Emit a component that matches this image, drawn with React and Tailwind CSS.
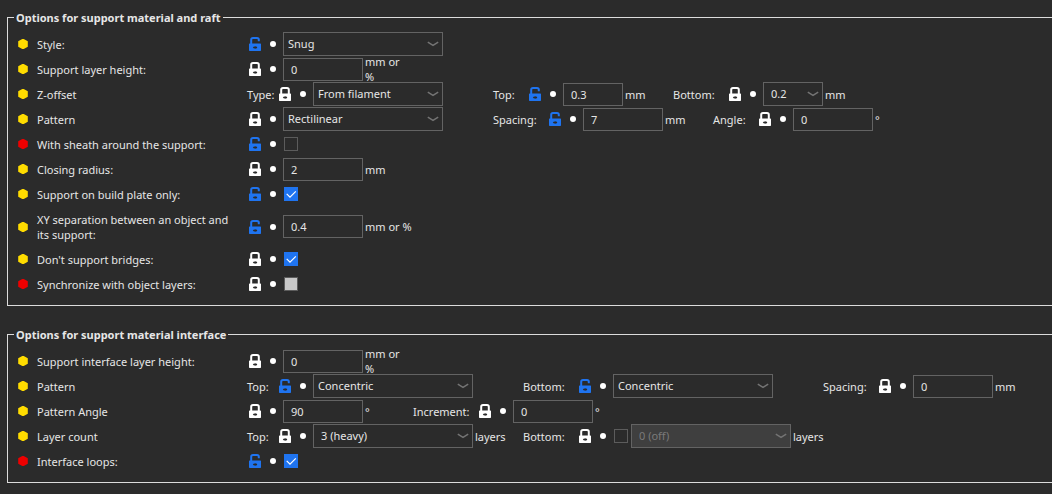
import React, { useId } from "react";

function Bullet({ color = "yellow" }) {
  return (
    <svg
      viewBox="0 0 10 10"
      className={`h-[10px] w-[10px] shrink-0 ${color === "red" ? "fill-[#ed0000]" : "fill-[#ffdc00]"}`}
      aria-hidden="true"
    >
      <path d="M5 -0.4 9.8 2.2V7.8L5 10.4.2 7.8V2.2Z" />
    </svg>
  );
}

function Lock({ open }) {
  return (
    <button
      type="button"
      aria-label={open ? "Value differs from system preset" : "Value matches system preset"}
      className={`h-[14px] w-[12px] shrink-0 ${open ? "text-[#1f74f0]" : "text-white"}`}
    >
      <svg viewBox="0 0 12 14" className="block h-[14px] w-[12px]" aria-hidden="true">
        <path
          d={open ? "M2.2 7V2.8Q2.2 1 4 1H8Q9.8 1 9.8 2.8V4.2" : "M2.2 7V2.8Q2.2 1 4 1H8Q9.8 1 9.8 2.8V7"}
          fill="none"
          stroke="currentColor"
          strokeWidth="2"
        />
        <path d="M.7 6.4H11.3Q12 6.4 12 7.1V13.3Q12 14 11.3 14H.7Q0 14 0 13.3V7.1Q0 6.4 .7 6.4Z" fill="currentColor" />
        <path d="M3.8 10.5 5.6 9V9.9H6.2V9.3H7.4V9.9H8.1V11.1H7.4V11.7H6.2V11.1H5.6V12Z" fill="#2b2b2b" />
      </svg>
    </button>
  );
}

function Dot() {
  return (
    <button type="button" aria-label="Value is saved" className="ml-[9px] mr-[7px] h-[6px] w-[6px] shrink-0 rounded-full bg-white" />
  );
}

function TextField({ id, value }) {
  return (
    <input
      id={id}
      type="text"
      defaultValue={value}
      className="block h-[23px] w-full border border-[#636363] bg-[#2b2b2b] px-[7px] outline-none"
    />
  );
}

function Dropdown({ id, value, inset, disabled }) {
  return (
    <span className="relative block w-full">
      <select
        id={id}
        defaultValue={value}
        disabled={disabled}
        className={`block h-[24px] w-full appearance-none border border-[#636363] pb-[2px] pr-[20px] opacity-100 outline-none ${
          inset ? "pl-[7px]" : "pl-[4px]"
        } ${disabled ? "bg-[#3f3f3f] text-[#7a7a7a]" : "bg-[#2b2b2b]"}`}
      >
        <option>{value}</option>
      </select>
      <svg
        viewBox="0 0 12 6"
        className="pointer-events-none absolute right-[4px] top-[9px] h-[6px] w-[12px] fill-none stroke-[#747474]"
        aria-hidden="true"
      >
        <path d="M.8 1.2 6 4.4 11.2 1.2" strokeWidth="1.5" />
      </svg>
    </span>
  );
}

function Check({ id, label, checked, filled }) {
  return (
    <span className="ml-px grid h-[14px] w-[14px] shrink-0">
      <input
        id={id}
        aria-label={label}
        type="checkbox"
        defaultChecked={checked}
        disabled={filled}
        className={`peer col-start-1 row-start-1 h-[14px] w-[14px] appearance-none border border-[#5c5c5c] checked:border-[#1f74f0] checked:bg-[#1f74f0] ${
          filled ? "bg-[#c8c8c8]" : ""
        }`}
      />
      <svg
        viewBox="0 0 14 14"
        className="pointer-events-none invisible col-start-1 row-start-1 h-[14px] w-[14px] fill-none stroke-white peer-checked:visible"
        aria-hidden="true"
      >
        <path d="M2.7 6.8 6 10.1 11.8 4.4" strokeWidth="1.2" />
      </svg>
    </span>
  );
}

/* One setting: optional caption, lock and dot markers, the control, its unit. */
function Field({ id, caption, captionWidth = "w-[2px]", open, width = "w-[80px]", unit, nowrap, before, children }) {
  return (
    <div className="flex items-center">
      <label htmlFor={id} className={`${captionWidth} shrink-0 whitespace-nowrap`}>
        {caption}
      </label>
      <Lock open={open} />
      <Dot />
      {before}
      <div className={`${width} shrink-0`}>{children}</div>
      <span className={`w-[50px] shrink-0 pl-[2px] ${nowrap ? "whitespace-nowrap" : "pr-[6px]"}`}>{unit}</span>
    </div>
  );
}

function Text({ caption, captionWidth, open, unit, nowrap, value, id, width }) {
  const own = useId();
  return (
    <Field id={id || own} {...{ caption, captionWidth, open, unit, nowrap, width }}>
      <TextField id={id || own} value={value} />
    </Field>
  );
}

function Select({ caption, captionWidth, open, unit, value, id, width = "w-[160px]", inset }) {
  const own = useId();
  return (
    <Field id={id || own} {...{ caption, captionWidth, open, unit, width }}>
      <Dropdown id={id || own} value={value} inset={inset} />
    </Field>
  );
}

function Row({ title, color, htmlFor, tall, children }) {
  return (
    <div className={`flex items-center pb-px pl-[10px] ${tall ? "h-[40px]" : "h-[25px]"}`}>
      <Bullet color={color} />
      <label htmlFor={htmlFor} className="ml-[9px] mr-[10px] w-[200px] shrink-0">
        {title}
      </label>
      {children}
    </div>
  );
}

function CheckRow({ title, color, open, checked, filled }) {
  const id = useId();
  return (
    <Row title={title} color={color} htmlFor={id}>
      <Field id={id} open={open}>
        <Check id={id} checked={checked} filled={filled} />
      </Field>
    </Row>
  );
}

function Section({ title, children }) {
  return (
    <fieldset className="min-w-0 border border-r-0 border-[#dcdcdc] pb-[8px]">
      <legend className="ml-[6px] px-[2px] font-bold leading-[15px]">{title}</legend>
      <div className="pt-[7px]">{children}</div>
    </fieldset>
  );
}

export default function App() {
  return (
    <main className="flex min-h-screen flex-col gap-[21px] overflow-hidden bg-[#2b2b2b] pb-[10px] pl-[7px] pt-[10px] font-['Noto_Sans',sans-serif] text-[11px] leading-[15px] text-[#e6e6e6]">
      <Section title="Options for support material and raft">
        <Row title="Style:" htmlFor="style">
          <Select id="style" open value="Snug" />
        </Row>
        <Row title="Support layer height:" htmlFor="layer-height">
          <Text id="layer-height" value="0" unit="mm or %" />
        </Row>
        <Row title="Z-offset">
          <Select caption="Type:" captionWidth="w-[32px]" width="w-[130px]" value="From filament" />
          <Text caption="Top:" captionWidth="w-[36px]" width="w-[60px]" open value="0.3" unit="mm" />
          <Select caption="Bottom:" captionWidth="w-[56px]" width="w-[60px]" inset value="0.2" unit="mm" />
        </Row>
        <Row title="Pattern" htmlFor="pattern">
          <Select id="pattern" value="Rectilinear" />
          <Text caption="Spacing:" captionWidth="w-[56px]" open value="7" unit="mm" />
          <Text caption="Angle:" captionWidth="w-[46px]" value="0" unit="°" />
        </Row>
        <CheckRow title="With sheath around the support:" color="red" open />
        <Row title="Closing radius:" htmlFor="closing-radius">
          <Text id="closing-radius" value="2" unit="mm" />
        </Row>
        <CheckRow title="Support on build plate only:" open checked />
        <Row title="XY separation between an object and its support:" htmlFor="xy-separation" tall>
          <Text id="xy-separation" open value="0.4" unit="mm or %" nowrap />
        </Row>
        <CheckRow title="Don't support bridges:" checked />
        <CheckRow title="Synchronize with object layers:" color="red" filled />
      </Section>

      <Section title="Options for support material interface">
        <Row title="Support interface layer height:" htmlFor="interface-height">
          <Text id="interface-height" value="0" unit="mm or %" />
        </Row>
        <Row title="Pattern">
          <Select caption="Top:" captionWidth="w-[32px]" open value="Concentric" />
          <Select caption="Bottom:" captionWidth="w-[56px]" open value="Concentric" />
          <Text caption="Spacing:" captionWidth="w-[56px]" value="0" unit="mm" />
        </Row>
        <Row title="Pattern Angle" htmlFor="pattern-angle">
          <Text id="pattern-angle" value="90" unit="°" />
          <Text caption="Increment:" captionWidth="w-[66px]" value="0" unit="°" />
        </Row>
        <Row title="Layer count">
          <Select caption="Top:" captionWidth="w-[32px]" inset value="3 (heavy)" unit="layers" />
          <Field
            id="bottom-layers"
            caption="Bottom:"
            captionWidth="w-[56px]"
            width="w-[160px]"
            unit="layers"
            before={
              <span className="mr-[3px]">
                <Check label="Set bottom layer count" />
              </span>
            }
          >
            <Dropdown id="bottom-layers" value="0 (off)" inset disabled />
          </Field>
        </Row>
        <CheckRow title="Interface loops:" color="red" open checked />
      </Section>
    </main>
  );
}
